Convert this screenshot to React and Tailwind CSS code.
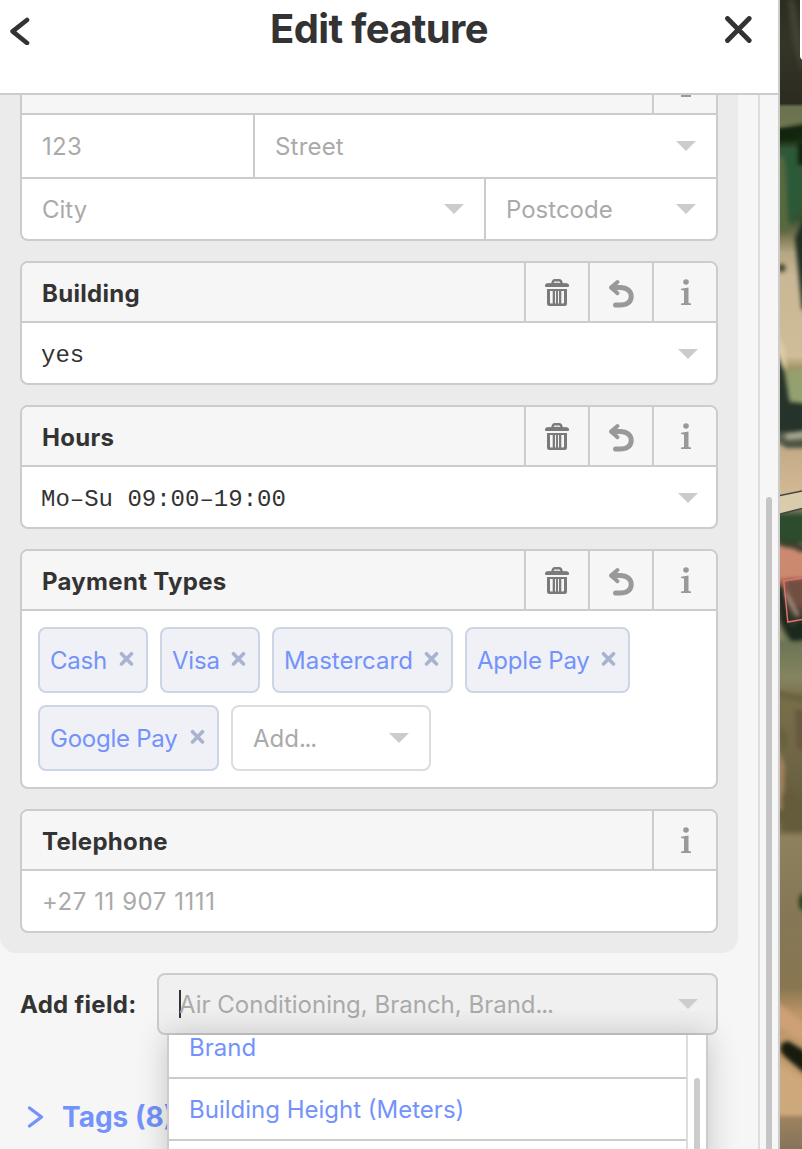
import React from 'react';

function Caret({ className = '' }) {
  return (
    <svg className={'h-[10px] w-5 shrink-0 ' + className} viewBox="0 0 20 10">
      <path d="M0 0H20L10 10Z" fill="#ccc" />
    </svg>
  );
}

function TrashIcon() {
  return (
    <svg className="mt-[2px] h-7 w-6" viewBox="0 0 24 28">
      <path d="M7.500 4.600C7.500 2 8.600 1.300 10 1.300H14C15.400 1.300 16.500 2 16.500 4.600" fill="none" stroke="#7a7a7a" strokeWidth="2.400" />
      <path d="M2 4.200Q12 3.400 22 4.200Q24 4.500 24 6.200V7Q24 8 23 8H1Q0 8 0 7V6.200Q0 4.500 2 4.200Z" fill="#7a7a7a" />
      <path
        fillRule="evenodd"
        d="M2 10H22V24.500Q22 27 19.500 27H4.500Q2 27 2 24.500ZM5 12V23.500Q5 24.500 6 24.500H7.700V12ZM10 12V24.500H11V12ZM13 12V24.500H14V12ZM16.300 12V24.500H18Q19 24.500 19 23.500V12Z"
        fill="#7a7a7a"
      />
    </svg>
  );
}

function UndoIcon() {
  return (
    <svg className="mt-[4px] h-[30px] w-[26px]" viewBox="0 0 26 30">
      <path d="M9.500 3L3 8.600L9.500 14.300" fill="none" stroke="#999" strokeWidth="4" strokeLinecap="round" strokeLinejoin="round" />
      <path d="M4.500 8.500H12C19 8.500 23.200 12 23.200 17.500C23.200 23 19 26 12 26H7.500" fill="none" stroke="#999" strokeWidth="5" strokeLinecap="round" />
    </svg>
  );
}

function InfoIcon() {
  return (
    <svg className="-mt-[1px] ml-[2px] h-[26px] w-[10px]" viewBox="0 0 10 26">
      <circle cx="5" cy="3" r="2.800" fill="#999" />
      <path d="M0 9.800L7.500 8.500V24L10 24.500V26H0V24.500L3 24V11.500L0 11Z" fill="#999" />
    </svg>
  );
}

function HeadButton({ children }) {
  return (
    <button className="flex h-full w-16 shrink-0 items-center justify-center border-l-2 border-[#ccc]">{children}</button>
  );
}

function Field({ title, editable, children }) {
  return (
    <section className="overflow-hidden rounded-lg border-2 border-[#ccc] bg-white">
      <div className="flex h-[60px] items-center border-b-2 border-[#ccc] bg-[#f6f6f6]">
        <h4 className="flex-1 pl-5 pt-1 text-[24px] leading-[30px] font-bold tracking-[0.3px]">{title}</h4>
        {editable && (
          <HeadButton>
            <TrashIcon />
          </HeadButton>
        )}
        {editable && (
          <HeadButton>
            <UndoIcon />
          </HeadButton>
        )}
        <HeadButton>
          <InfoIcon />
        </HeadButton>
      </div>
      {children}
    </section>
  );
}

function MonoValue({ children }) {
  return (
    <div className="flex h-[60px] items-center justify-between pr-[18px] pl-5">
      <span className="-ml-[1px] pt-[5px] font-['Liberation_Mono',monospace] text-[24px] leading-[30px]">{children}</span>
      <Caret className="mt-[2px]" />
    </div>
  );
}

function Placeholder({ children, caret, className }) {
  return (
    <div className={'flex items-center justify-between pr-5 pl-5 text-[#aaa] ' + className}>
      <span className="leading-[30px]">{children}</span>
      {caret && <Caret className="-mt-[3px]" />}
    </div>
  );
}

function Chip({ label, className }) {
  return (
    <li className={'flex h-[66px] items-center justify-between rounded-lg border-2 border-[#ccd5e3] bg-[#eff1f6] pr-[12px] pl-[10px] text-[#7393fb] ' + className}>
      <span className="pt-[2px] whitespace-nowrap">{label}</span>
      <svg className="-mt-[3px] -ml-2 h-4 w-4 shrink-0" viewBox="0 0 16 16">
        <path d="M3.500 2.700L13.500 12.900M13.500 2.700L3.500 12.900" stroke="#a8b4cf" strokeWidth="3.600" strokeLinecap="round" />
      </svg>
    </li>
  );
}

function MapStrip() {
  return (
    <svg className="h-[1149px] w-[22px] shrink-0" viewBox="0 0 22 1149">
      <defs>
        <linearGradient id="ground" x1="0" y1="0" x2="0" y2="1149" gradientUnits="userSpaceOnUse">
          <stop offset="0" stopColor="#2c2c20" />
          <stop offset=".04" stopColor="#343427" />
          <stop offset=".09" stopColor="#2b2b20" />
          <stop offset=".093" stopColor="#69714d" />
          <stop offset=".11" stopColor="#707653" />
          <stop offset=".115" stopColor="#13230f" />
          <stop offset=".122" stopColor="#17300f" />
          <stop offset=".13" stopColor="#34563a" />
          <stop offset=".165" stopColor="#2f5a38" />
          <stop offset=".19" stopColor="#365132" />
          <stop offset=".205" stopColor="#77764f" />
          <stop offset=".22" stopColor="#b4a583" />
          <stop offset=".24" stopColor="#c9b795" />
          <stop offset=".31" stopColor="#cfbc98" />
          <stop offset=".32" stopColor="#a29869" />
          <stop offset=".345" stopColor="#84955d" />
          <stop offset=".355" stopColor="#222b20" />
          <stop offset=".37" stopColor="#2b3029" />
          <stop offset=".382" stopColor="#6b715e" />
          <stop offset=".39" stopColor="#c3ab88" />
          <stop offset=".43" stopColor="#d3b993" />
          <stop offset=".448" stopColor="#52644a" />
          <stop offset=".455" stopColor="#2a4a2c" />
          <stop offset=".468" stopColor="#2b4229" />
          <stop offset=".478" stopColor="#c98b70" />
          <stop offset=".5" stopColor="#c4775b" />
          <stop offset=".52" stopColor="#795345" />
          <stop offset=".54" stopColor="#303326" />
          <stop offset=".556" stopColor="#697354" />
          <stop offset=".59" stopColor="#858460" />
          <stop offset=".61" stopColor="#776e49" />
          <stop offset=".65" stopColor="#736848" />
          <stop offset=".71" stopColor="#625b39" />
          <stop offset=".73" stopColor="#8e815d" />
          <stop offset=".8" stopColor="#857756" />
          <stop offset=".86" stopColor="#897650" />
          <stop offset=".882" stopColor="#bc9568" />
          <stop offset=".96" stopColor="#caa577" />
          <stop offset=".97" stopColor="#9f835f" />
          <stop offset="1" stopColor="#85735a" />
        </linearGradient>
        <filter id="soft" filterUnits="userSpaceOnUse" x="-10" y="-10" width="42" height="1169" colorInterpolationFilters="sRGB">
          <feGaussianBlur stdDeviation="2" />
        </filter>
      </defs>
      <rect width="22" height="1149" fill="url(#ground)" />
      <g filter="url(#soft)">
        <path d="M8 0H14L22 40V75L12 40Z" fill="#424133" />
        <path d="M-6 130L28 123V136L-6 142Z" fill="#14240f" />
        <path d="M18 142H28V165H18Z" fill="#10220f" />
        <path d="M-6 150L5 160L9 232H-6Z" fill="#566a42" />
        <path d="M8 150L16 150L20 205L11 225Z" fill="#2a5a38" />
        <path d="M28 208L15 238L22 310H28Z" fill="#202e23" />
        <ellipse cx="1.500" cy="268" rx="4" ry="4" fill="#42412d" />
        <path d="M-6 325L6 350V370H-6Z" fill="#dccaa2" />
        <path d="M-6 348L4 370L10 405L28 404V432L-6 430Z" fill="#26332a" />
        <path d="M7 374L28 367V404L9 400Z" fill="#94a070" />
        <path d="M5 434L28 430V437L7 442Z" fill="#a7a58e" />
        <path d="M-6 436L8 440L28 439V448H6Z" fill="#4a5442" />
        <path d="M-6 515H28V540L8 545L-6 536Z" fill="#2c4c2d" />
        <path d="M-6 541H9L28 546V552H13Z" fill="#3a402f" />
        <path d="M-6 546L12 548L28 555V578L3 578L-6 580Z" fill="#cb8a70" />
        <path d="M-6 580L4 590L10 626L28 618V640L11 641L4 627Z" fill="#1c271e" />
        <path d="M5 580L28 578V610L10 602Z" fill="#704f42" />
        <path d="M5 592L18 616" stroke="#b6a091" strokeWidth="3" />
        <path d="M-6 604L5 640H-6Z" fill="#8f8a62" />
        <path d="M-6 690L28 696V704L-6 696Z" fill="#6a6240" />
        <path d="M-6 722L8 735L5 755Z" fill="#66613d" />
        <path d="M-6 740L5 765L3 810H-6Z" fill="#a1835d" />
        <path d="M15 710H28V750H17Z" fill="#665840" />
        <path d="M2 795L12 790L28 820V832H2Z" fill="#655c3c" />
        <ellipse cx="23" cy="902" rx="4" ry="9" fill="#253b1c" />
        <path d="M-6 1000L28 1026V1044L-6 1024Z" fill="#cda075" />
        <path d="M-6 1060L28 1084V1116H-6Z" fill="#cda87b" />
      </g>
      <g filter="url(#soft)">
        <path d="M2 1043L8 1041L30 1054V1078L4 1056L0 1050Z" fill="#171b0c" />
      </g>
      <path d="M0 495.500L22 491V508.500L0 514Z" fill="#d9ccaa" />
      <path d="M0 495.500L22 491M0 514L22 508.500" stroke="#444448" strokeWidth="1.600" />
      <path d="M22 578L3.800 581L7.800 622L22 619.500" fill="none" stroke="#e0706a" strokeWidth="1.500" />
      <rect x="20" y="-8" width="12" height="68" rx="4" fill="#fff" />
    </svg>
  );
}

export default function App() {
  return (
    <div className="flex h-[1149px] w-[802px] overflow-hidden bg-[#f6f6f6] font-['Inter',sans-serif] text-[24px] leading-[30px] text-[#333]">
      <div className="flex h-full w-[780px] shrink-0 flex-col border-r-2 border-[#ccc]">
        <header className="flex h-[95px] shrink-0 justify-between border-b-2 border-[#ccc] bg-white pr-[26px] pl-[10px]">
          <svg className="mt-[17px] h-7 w-5" viewBox="0 0 20 28">
            <path d="M17 3L2.600 14.400L17 26" fill="none" stroke="#333" strokeWidth="4.600" strokeLinecap="round" strokeLinejoin="round" />
          </svg>
          <h1 className="mt-1 ml-1 text-[40px] leading-[50px] font-bold tracking-[-0.65px]">Edit feature</h1>
          <svg className="mt-4 h-7 w-7" viewBox="0 0 28 28">
            <path d="M3.500 2.500L25.200 24.500M25.200 2.500L3.500 24.500" stroke="#333" strokeWidth="4.800" strokeLinecap="round" />
          </svg>
        </header>

        <div className="flex min-h-0 flex-1">
          <main className="flex w-[758px] shrink-0 flex-col">
            <div className="flex w-[738px] shrink-0 flex-col gap-5 rounded-b-2xl bg-[#ebebeb] px-5 pb-5">
              <section className="flex h-[146px] shrink-0 flex-col overflow-hidden rounded-b-lg border-2 border-t-0 border-[#ccc] bg-white">
                <div className="flex h-5 shrink-0 justify-end border-b-2 border-[#ccc] bg-[#f6f6f6]">
                  <div className="flex w-16 justify-center border-l-2 border-[#ccc]">
                    <div className="ml-[2px] h-[2px] w-[10px] bg-[#999]" />
                  </div>
                </div>
                <div className="flex h-16 shrink-0 border-b-2 border-[#ccc]">
                  <Placeholder className="w-[231px] shrink-0 pt-[2px] tracking-[0.3px]">123</Placeholder>
                  <Placeholder caret className="flex-1 border-l-2 border-[#ccc] pt-[2px] tracking-[0.2px]">Street</Placeholder>
                </div>
                <div className="flex flex-1">
                  <Placeholder caret className="w-[462px] shrink-0 pt-[2px]">City</Placeholder>
                  <Placeholder caret className="flex-1 border-l-2 border-[#ccc] pt-[2px]">Postcode</Placeholder>
                </div>
              </section>

              <Field title="Building" editable>
                <MonoValue>yes</MonoValue>
              </Field>
              <Field title="Hours" editable>
                <MonoValue>Mo–Su 09:00–19:00</MonoValue>
              </Field>
              <Field title="Payment Types" editable>
                <ul className="flex h-[176px] flex-wrap content-start gap-3 px-4 pt-4">
                  <Chip label="Cash" className="w-[110px] tracking-[-0.2px]" />
                  <Chip label="Visa" className="w-[100px] tracking-[-0.2px]" />
                  <Chip label="Mastercard" className="w-[181px]" />
                  <Chip label="Apple Pay" className="w-[165px] tracking-[-0.2px]" />
                  <Chip label="Google Pay" className="w-[181px] tracking-[-0.25px]" />
                  <li className="flex h-[66px] w-[200px] items-center justify-between rounded-lg border-2 border-[#ddd] bg-white px-5 text-[#aaa]">
                    <span className="pt-[2px]">
                      Add<span className="tracking-[-1.3px]">...</span>
                    </span>
                    <Caret />
                  </li>
                </ul>
              </Field>
              <Field title="Telephone">
                <Placeholder className="h-[60px] pt-[2px] tracking-[0.55px]">+27 11 907 1111</Placeholder>
              </Field>
            </div>

            <div className="relative mt-5 flex h-[62px] w-[718px] shrink-0 items-center pl-5">
              <label className="w-[137px] shrink-0 pt-[2px] font-bold tracking-[0.3px]">Add field:</label>
              <div className="flex h-[62px] flex-1 items-center rounded-lg border-2 border-[#ccc] bg-[#f0f0f0] pr-[18px] pl-5">
                <i className="h-7 w-[2px] bg-[#333]" />
                <span className="-ml-[2px] flex-1 pt-[2px] text-[#aaa]">
                  Air Conditioning, Branch, Brand<span className="tracking-[-1.2px]">...</span>
                </span>
                <Caret />
              </div>
              <div className="absolute top-[62px] left-[167px] z-10 flex h-[200px] w-[541px] border-x-2 border-[#ccc] bg-white text-[#7393fb] shadow-[0_0_30px_rgba(0,0,0,0.2)] [clip-path:inset(-24px_-40px_0_-40px)]">
                <div className="w-[517px] shrink-0">
                  <div className="flex h-11 items-start border-b-2 border-[#ccc] pl-5">
                    <span className="-mt-[2px]">Brand</span>
                  </div>
                  <div className="flex h-[62px] items-center border-b-2 border-[#ccc] pt-[2px] pl-5">Building Height (Meters)</div>
                </div>
                <div className="flex flex-1 justify-center border-l-2 border-[#ddd] pt-[43px]">
                  <div className="h-full w-[6px] rounded-full bg-[#ccc]" />
                </div>
              </div>
            </div>

            <div className="mt-[61px] flex items-center pl-[27px] text-[#7393fb]">
              <svg className="h-6 w-[18px]" viewBox="0 0 18 24">
                <path d="M2.500 3L14.500 12L2.500 21" fill="none" stroke="#7393fb" strokeWidth="3.400" strokeLinecap="round" strokeLinejoin="round" />
              </svg>
              <h3 className="pt-[1px] pl-[17px] text-[28px] leading-[40px] font-bold">Tags (8)</h3>
            </div>
          </main>
          <div className="flex flex-1 border-l-2 border-[#ddd] pt-[402px] pl-[6px]">
            <div className="h-[800px] w-[6px] rounded-full bg-[#c5c5c5]" />
          </div>
        </div>
      </div>
      <MapStrip />
    </div>
  );
}
